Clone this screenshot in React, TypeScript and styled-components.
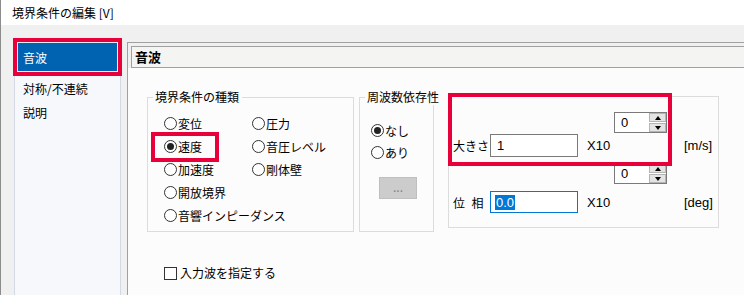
import React, { FC } from 'react';
import styled, { createGlobalStyle } from 'styled-components';

const GlobalStyle = createGlobalStyle`
  html, body { margin: 0; padding: 0; }
  body {
    font-family: "Noto Sans CJK JP", "Noto Sans", sans-serif;
    font-size: 12px;
    color: #000;
  }
`;

const Window = styled.div`
  width: 744px;
  height: 295px;
  overflow: hidden;
  box-sizing: border-box;
  background: #f0f0f0;
  border-left: 1px solid #8c8c8c;
  display: flex;
  flex-direction: column;
`;

const TitleBar = styled.div`
  flex: none;
  height: 25px;
  background: #fff;
  display: flex;
  align-items: center;
  padding-left: 11px;
  line-height: 16px;
`;

const Body = styled.div`
  flex: 1;
  display: flex;
  padding-top: 13px;
  min-height: 0;
`;

const Sidebar = styled.div`
  flex: none;
  width: 107px;
  margin-left: 13px;
  box-sizing: border-box;
  background: #f7f8fb;
  border-left: 1px solid #d3d9e6;
  border-right: 1px solid #d3d9e6;
`;

const NavItem = styled.div<{ $active?: boolean }>`
  position: relative;
  height: ${p => (p.$active ? 38 : 24)}px;
  display: flex;
  align-items: center;
  padding-left: 8px;
  background: ${p => (p.$active ? '#0063b1' : 'transparent')};
  color: ${p => (p.$active ? '#fff' : '#000')};
`;

// red annotation frame drawn over content
const Mark = styled.span<{ $t: number; $l: number; $w: number; $h: number; $inner?: boolean }>`
  position: absolute;
  top: ${p => p.$t}px;
  left: ${p => p.$l}px;
  width: ${p => p.$w}px;
  height: ${p => p.$h}px;
  box-sizing: border-box;
  border: 4px solid #e8003a;
  box-shadow: ${p => (p.$inner ? 'inset 0 0 0 1px #e4ecf7' : 'none')};
  pointer-events: none;
`;

const Panel = styled.div`
  flex: 1;
  margin: 4px 0 0 6px;
  background: #fcfcfc;
  border-left: 1px solid #a0a0a0;
  border-top: 1px solid #a0a0a0;
  display: flex;
  flex-direction: column;
`;

const HeaderWrap = styled.div`
  background: #f0f0f0;
  padding: 3px 0 0 3px;
`;

const Header = styled.div`
  height: 22px;
  box-sizing: border-box;
  border: 1px solid #a0a0a0;
  border-right: none;
  background: #f4f4f2;
  padding-left: 3px;
  font-size: 13px;
  font-weight: 700;
  line-height: 19px;
`;

const Content = styled.div`
  padding: 21px 0 0 19px;
`;

const Groups = styled.div`
  display: flex;
  align-items: flex-start;
`;

const Group = styled.fieldset<{ $w: number; $gap?: number }>`
  margin: 0 0 0 ${p => p.$gap ?? 0}px;
  padding: 0;
  min-width: 0;
  width: ${p => p.$w}px;
  box-sizing: border-box;
  border: 1px solid #dcdcdc;
`;

const Legend = styled.legend`
  margin-left: 5px;
  padding: 0 3px 0 2px;
  line-height: 16px;
  white-space: nowrap;
`;

const RadioGrid = styled.div`
  display: grid;
  grid-template-columns: 88px 88px;
  grid-auto-rows: 23px;
  padding: 7px 0 4px 16px;
`;

const RadioStack = styled.div`
  display: grid;
  grid-auto-rows: 22px;
  padding: 14px 0 0 11px;
`;

const RadioItem = styled.label<{ $span?: number }>`
  position: relative;
  display: flex;
  align-items: center;
  gap: 1px;
  white-space: nowrap;
  grid-column: span ${p => p.$span ?? 1};
`;

const RadioCircle = styled.span<{ $on?: boolean }>`
  flex: none;
  width: 13px;
  height: 13px;
  box-sizing: border-box;
  border: 1px solid #333;
  border-radius: 50%;
  background: #fff;
  display: flex;
  align-items: center;
  justify-content: center;

  &::after {
    content: '';
    display: ${p => (p.$on ? 'block' : 'none')};
    width: 7px;
    height: 7px;
    border-radius: 50%;
    background: #222;
  }
`;

const DotsButton = styled.div`
  width: 38px;
  height: 22px;
  box-sizing: border-box;
  margin: 14px 0 32px 19px;
  background: #cccccc;
  border: 1px solid #bfbfbf;
  color: #838383;
  display: flex;
  align-items: center;
  justify-content: center;
  line-height: 1;
  padding-bottom: 2px;
`;

const ValueBox = styled.div`
  position: relative;
  width: 271px;
  height: 132px;
  box-sizing: border-box;
  margin: 7px 0 0 14px;
  border: 1px solid #dcdcdc;
  padding: 15px 0 0 4px;
  display: flex;
  flex-direction: column;
`;

const Line = styled.div<{ $h: number; $top: number }>`
  display: grid;
  grid-template-columns: 37px 88px 36px 53px auto;
  align-items: center;
  height: ${p => p.$h}px;
  margin-top: ${p => p.$top}px;
  white-space: nowrap;
`;

const Label = styled.span<{ $col?: number }>`
  grid-column: ${p => p.$col ?? 'auto'};
`;

const Spacer = styled.span`
  letter-spacing: 0.55em;
`;

const Input = styled.div<{ $focus?: boolean }>`
  height: 100%;
  box-sizing: border-box;
  background: #fff;
  border: 1px solid ${p => (p.$focus ? '#0078d7' : '#7a7a7a')};
  display: flex;
  align-items: center;
  padding-left: ${p => (p.$focus ? 4 : 6)}px;
  font-family: "Liberation Sans", "Noto Sans", sans-serif;
  font-size: 13px;
`;

const Selected = styled.span`
  background: #0078d7;
  color: #fff;
  padding: 0 1px;
  line-height: 15px;
`;

const Latin = styled.span<{ $col?: number; $pad?: number }>`
  grid-column: ${p => p.$col ?? 'auto'};
  padding-left: ${p => p.$pad ?? 0}px;
  font-family: "Liberation Sans", "Noto Sans", sans-serif;
  font-size: 13px;
`;

const Spinner = styled.div`
  grid-column: 4;
  height: 100%;
  box-sizing: border-box;
  display: flex;
  border: 1px solid #7a7a7a;
  background: #fff;
`;

const SpinValue = styled.div`
  flex: 1;
  display: flex;
  align-items: center;
  padding-left: 6px;
  font-family: "Liberation Sans", "Noto Sans", sans-serif;
  font-size: 13px;
`;

const SpinButtons = styled.div`
  width: 17px;
  display: flex;
  flex-direction: column;
  gap: 1px;
  background: #fff;
`;

const SpinButton = styled.div`
  flex: 1;
  background: #e3e3e3;
  border: 1px solid #b4b4b4;
  display: flex;
  align-items: center;
  justify-content: center;
`;

const Arrow = styled.span<{ $down?: boolean }>`
  width: 0;
  height: 0;
  border-left: 3px solid transparent;
  border-right: 3px solid transparent;
  border-bottom: ${p => (p.$down ? 'none' : '4px solid #000')};
  border-top: ${p => (p.$down ? '4px solid #000' : 'none')};
`;

const CheckRow = styled.label`
  display: flex;
  align-items: center;
  gap: 3px;
  margin: 33px 0 0 17px;
  line-height: 16px;
`;

const CheckBox = styled.span`
  width: 13px;
  height: 13px;
  box-sizing: border-box;
  border: 1px solid #333;
  background: #fff;
`;

const Radio: FC<{ label: string; on?: boolean; span?: number; children?: React.ReactNode }> = ({ label, on, span, children }) => (
  <RadioItem $span={span}>
    <RadioCircle $on={on} />
    {label}
    {children}
  </RadioItem>
);

const Spin: FC<{ value: string }> = ({ value }) => (
  <Spinner>
    <SpinValue>{value}</SpinValue>
    <SpinButtons>
      <SpinButton><Arrow /></SpinButton>
      <SpinButton><Arrow $down /></SpinButton>
    </SpinButtons>
  </Spinner>
);

const App: FC = () => (
  <Window>
    <GlobalStyle />
    <TitleBar>境界条件の編集 [V]</TitleBar>
    <Body>
      <Sidebar>
        <NavItem $active>
          音波
          <Mark $t={0} $l={-2} $w={109} $h={38} $inner />
        </NavItem>
        <NavItem>対称/不連続</NavItem>
        <NavItem>説明</NavItem>
      </Sidebar>
      <Panel>
        <HeaderWrap>
          <Header>音波</Header>
        </HeaderWrap>
        <Content>
          <Groups>
            <Group $w={207}>
              <Legend>境界条件の種類</Legend>
              <RadioGrid>
                <Radio label="変位" />
                <Radio label="圧力" />
                <Radio label="速度" on>
                  <Mark $t={-3} $l={-13} $w={68} $h={30} />
                </Radio>
                <Radio label="音圧レベル" />
                <Radio label="加速度" />
                <Radio label="剛体壁" />
                <Radio label="開放境界" span={2} />
                <Radio label="音響インピーダンス" span={2} />
              </RadioGrid>
            </Group>
            <Group $w={75} $gap={5}>
              <Legend>周波数依存性</Legend>
              <RadioStack>
                <Radio label="なし" on />
                <Radio label="あり" />
              </RadioStack>
              <DotsButton>...</DotsButton>
            </Group>
            <ValueBox>
              <Line $h={21} $top={0}>
                <Spin value="0" />
              </Line>
              <Line $h={23} $top={1}>
                <Label>大きさ</Label>
                <Input>1</Input>
                <Latin $pad={9}>X10</Latin>
                <Latin $col={5} $pad={17}>[m/s]</Latin>
              </Line>
              <Line $h={21} $top={6}>
                <Spin value="0" />
              </Line>
              <Line $h={22} $top={7}>
                <Label><Spacer>位</Spacer>相</Label>
                <Input $focus><Selected>0.0</Selected></Input>
                <Latin $pad={9}>X10</Latin>
                <Latin $col={5} $pad={17}>[deg]</Latin>
              </Line>
              <Mark $t={-4} $l={-1} $w={224} $h={73} />
            </ValueBox>
          </Groups>
          <CheckRow>
            <CheckBox />
            入力波を指定する
          </CheckRow>
        </Content>
      </Panel>
    </Body>
  </Window>
);

export default App;
